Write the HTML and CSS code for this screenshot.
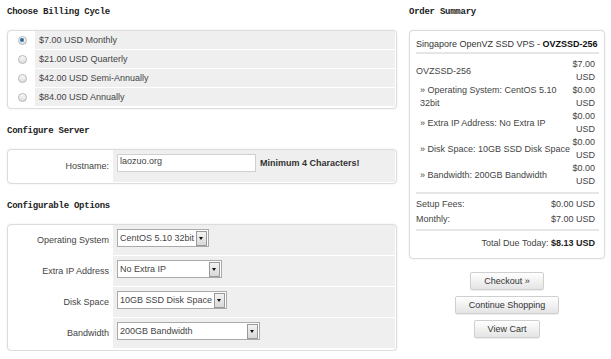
FILE: index.html
```html
<!DOCTYPE html>
<html lang="en">

<head>
  <meta charset="UTF-8">
  <title>Shopping Cart</title>
  <link rel="stylesheet" href="styles.css">
</head>

<body>
  <div class="page">
    <div class="main">
      <h2 class="heading">Choose Billing Cycle</h2>
      <div class="box cycles">
        <label class="cycle"><span class="pick"><input type="radio" name="cycle" checked></span><span class="cycle-text">$7.00 USD Monthly</span></label>
        <label class="cycle"><span class="pick"><input type="radio" name="cycle"></span><span class="cycle-text">$21.00 USD Quarterly</span></label>
        <label class="cycle"><span class="pick"><input type="radio" name="cycle"></span><span class="cycle-text">$42.00 USD Semi-Annually</span></label>
        <label class="cycle"><span class="pick"><input type="radio" name="cycle"></span><span class="cycle-text">$84.00 USD Annually</span></label>
      </div>

      <h2 class="heading">Configure Server</h2>
      <div class="box form server">
        <div class="form-label">Hostname:</div>
        <div class="form-field">
          <input class="text-input" type="text" value="laozuo.org">
          <strong class="hint">Minimum 4 Characters!</strong>
        </div>
      </div>

      <h2 class="heading">Configurable Options</h2>
      <div class="box form options">
        <div class="form-label">Operating System</div>
        <div class="form-field">
          <div class="select"><span class="select-value">CentOS 5.10 32bit</span><span class="select-arrow"></span></div>
        </div>
        <div class="form-label">Extra IP Address</div>
        <div class="form-field">
          <div class="select select-ip"><span class="select-value">No Extra IP</span><span class="select-arrow"></span></div>
        </div>
        <div class="form-label">Disk Space</div>
        <div class="form-field">
          <div class="select"><span class="select-value">10GB SSD Disk Space</span><span class="select-arrow"></span></div>
        </div>
        <div class="form-label">Bandwidth</div>
        <div class="form-field">
          <div class="select select-bw"><span class="select-value">200GB Bandwidth</span><span class="select-arrow"></span></div>
        </div>
      </div>
    </div>

    <div class="side">
      <h2 class="heading">Order Summary</h2>
      <div class="box summary">
        <div class="summary-title">Singapore OpenVZ SSD VPS - <strong>OVZSSD-256</strong></div>

        <div class="items">
          <div class="item-name">OVZSSD-256</div>
          <div class="item-price">$7.00<br>USD</div>
          <div class="item-name sub">» Operating System: CentOS 5.10<br>32bit</div>
          <div class="item-price">$0.00<br>USD</div>
          <div class="item-name sub">» Extra IP Address: No Extra IP</div>
          <div class="item-price">$0.00<br>USD</div>
          <div class="item-name sub">» Disk Space: 10GB SSD Disk Space</div>
          <div class="item-price">$0.00<br>USD</div>
          <div class="item-name sub">» Bandwidth: 200GB Bandwidth</div>
          <div class="item-price">$0.00<br>USD</div>
        </div>

        <div class="totals">
          <div>Setup Fees:</div>
          <div class="amount">$0.00 USD</div>
          <div>Monthly:</div>
          <div class="amount">$7.00 USD</div>
        </div>

        <div class="due">Total Due Today: <strong>$8.13 USD</strong></div>
      </div>

      <div class="actions">
        <button class="btn">Checkout »</button>
        <button class="btn">Continue Shopping</button>
        <button class="btn">View Cart</button>
      </div>
    </div>
  </div>
</body>

</html>
```

FILE: styles.css
```css
body {
  margin: 0;
  background-color: white;
  color: #444;
  font-family: "Liberation Sans", Arial, sans-serif;
  font-size: 9px;
}

.page {
  display: flex;
  gap: 12px;
  padding: 5px 6px 0 7px;
}

.main {
  width: 390px;
}

.side {
  width: 196px;
}

.heading {
  margin: 15px 0 11px;
  line-height: 14px;
  font-family: "Liberation Mono", "Courier New", monospace;
  font-size: 9px;
  letter-spacing: -0.25px;
  font-weight: bold;
  color: #222;
}

.main .heading:first-child,
.side .heading:first-child {
  margin-top: 0;
}

.box {
  border: 1px solid #dcdcdc;
  border-radius: 4px;
  box-shadow: 0 0 2px #e8e8e8;
  background: white;
}

/* billing cycle */
.cycles {
  display: flex;
  flex-direction: column;
  gap: 1px;
  padding: 0 1px 2px 0;
}

.cycle {
  display: grid;
  grid-template-columns: 27px 1fr;
  height: 18px;
}

.pick {
  display: flex;
  align-items: center;
  justify-content: center;
  padding-left: 1px;
}

.pick input {
  appearance: none;
  -webkit-appearance: none;
  width: 9px;
  height: 9px;
  margin: 0;
  border: 1px solid #b5b5b5;
  border-radius: 50%;
  background: linear-gradient(#fafafa, #dedede);
  position: relative;
}

.pick input:checked::after {
  content: "";
  position: absolute;
  left: 1.5px;
  top: 1.5px;
  width: 4px;
  height: 4px;
  border-radius: 50%;
  background: #2c6c9e;
}

.cycle-text {
  display: flex;
  align-items: center;
  padding-left: 4px;
  background-color: #efefef;
}

/* forms */
.form {
  display: grid;
  grid-template-columns: 105px 1fr;
  row-gap: 1px;
  padding: 0 1px 1px 0;
}

.form-label {
  display: flex;
  align-items: center;
  justify-content: flex-end;
  padding-right: 4px;
}

.form-field {
  display: flex;
  align-items: flex-start;
  gap: 4px;
  padding: 4px 4px 0;
  background-color: #efefef;
}

.server .form-field {
  padding-bottom: 10px;
}

.options {
  padding-bottom: 2px;
}

.options .form-field {
  height: 26px;
}

.text-input {
  width: 139px;
  height: 18px;
  box-sizing: border-box;
  margin: 0;
  padding: 0 2px 4px;
  border: 1px solid #d0d0d0;
  font-family: inherit;
  font-size: 9px;
  color: #444;
  background: white;
}

.hint {
  line-height: 18px;
  color: #333;
}

.select {
  display: flex;
  align-items: center;
  gap: 2px;
  height: 18px;
  box-sizing: border-box;
  border: 1px solid #aaa;
  background: white;
  padding: 0 1px 0 2px;
}

.select-value {
  flex: 1;
  white-space: nowrap;
}

.select-arrow {
  width: 9px;
  height: 13px;
  border: 1px solid #999;
  background: linear-gradient(#f3f3f3, #d8d8d8);
  position: relative;
}

.select-arrow::after {
  content: "";
  position: absolute;
  left: 2px;
  top: 5px;
  border-left: 2.5px solid transparent;
  border-right: 2.5px solid transparent;
  border-top: 3px solid #111;
}

.select-ip {
  width: 105px;
}

.select-bw {
  width: 143px;
}

/* order summary */
.summary {
  padding: 7px 5px 8px 6px;
  line-height: 13px;
}

.summary-title {
  color: #333;
  padding-bottom: 1px;
  border-bottom: 2px solid #e6e6e6;
}

.summary-title strong {
  color: #111;
}

.items {
  display: grid;
  grid-template-columns: minmax(0, 1fr) 36px;
  margin-top: 4px;
  padding-bottom: 4px;
  border-bottom: 2px solid #e6e6e6;
}

.item-name {
  display: flex;
  align-items: center;
  white-space: nowrap;
}

.item-name.sub {
  padding-left: 4px;
}

.item-price {
  text-align: right;
  padding-right: 4px;
}

.totals {
  display: grid;
  grid-template-columns: 1fr auto;
  line-height: 15px;
  margin-top: 3px;
  padding-bottom: 2px;
  border-bottom: 2px solid #e6e6e6;
}

.amount {
  text-align: right;
  padding-right: 4px;
}

.due {
  text-align: right;
  padding-right: 4px;
  margin-top: 5px;
  line-height: 14px;
}

.due strong {
  color: #222;
}

/* buttons */
.actions {
  display: flex;
  flex-direction: column;
  align-items: center;
  gap: 6px;
  margin-top: 13px;
}

.btn {
  height: 18px;
  padding: 0 13px;
  border: 1px solid #cfcfcf;
  border-radius: 2px;
  background: linear-gradient(#ffffff, #e4e4e4);
  font-family: inherit;
  font-size: 9px;
  color: #333;
  box-shadow: 0 1px 1px #eee;
}
```
